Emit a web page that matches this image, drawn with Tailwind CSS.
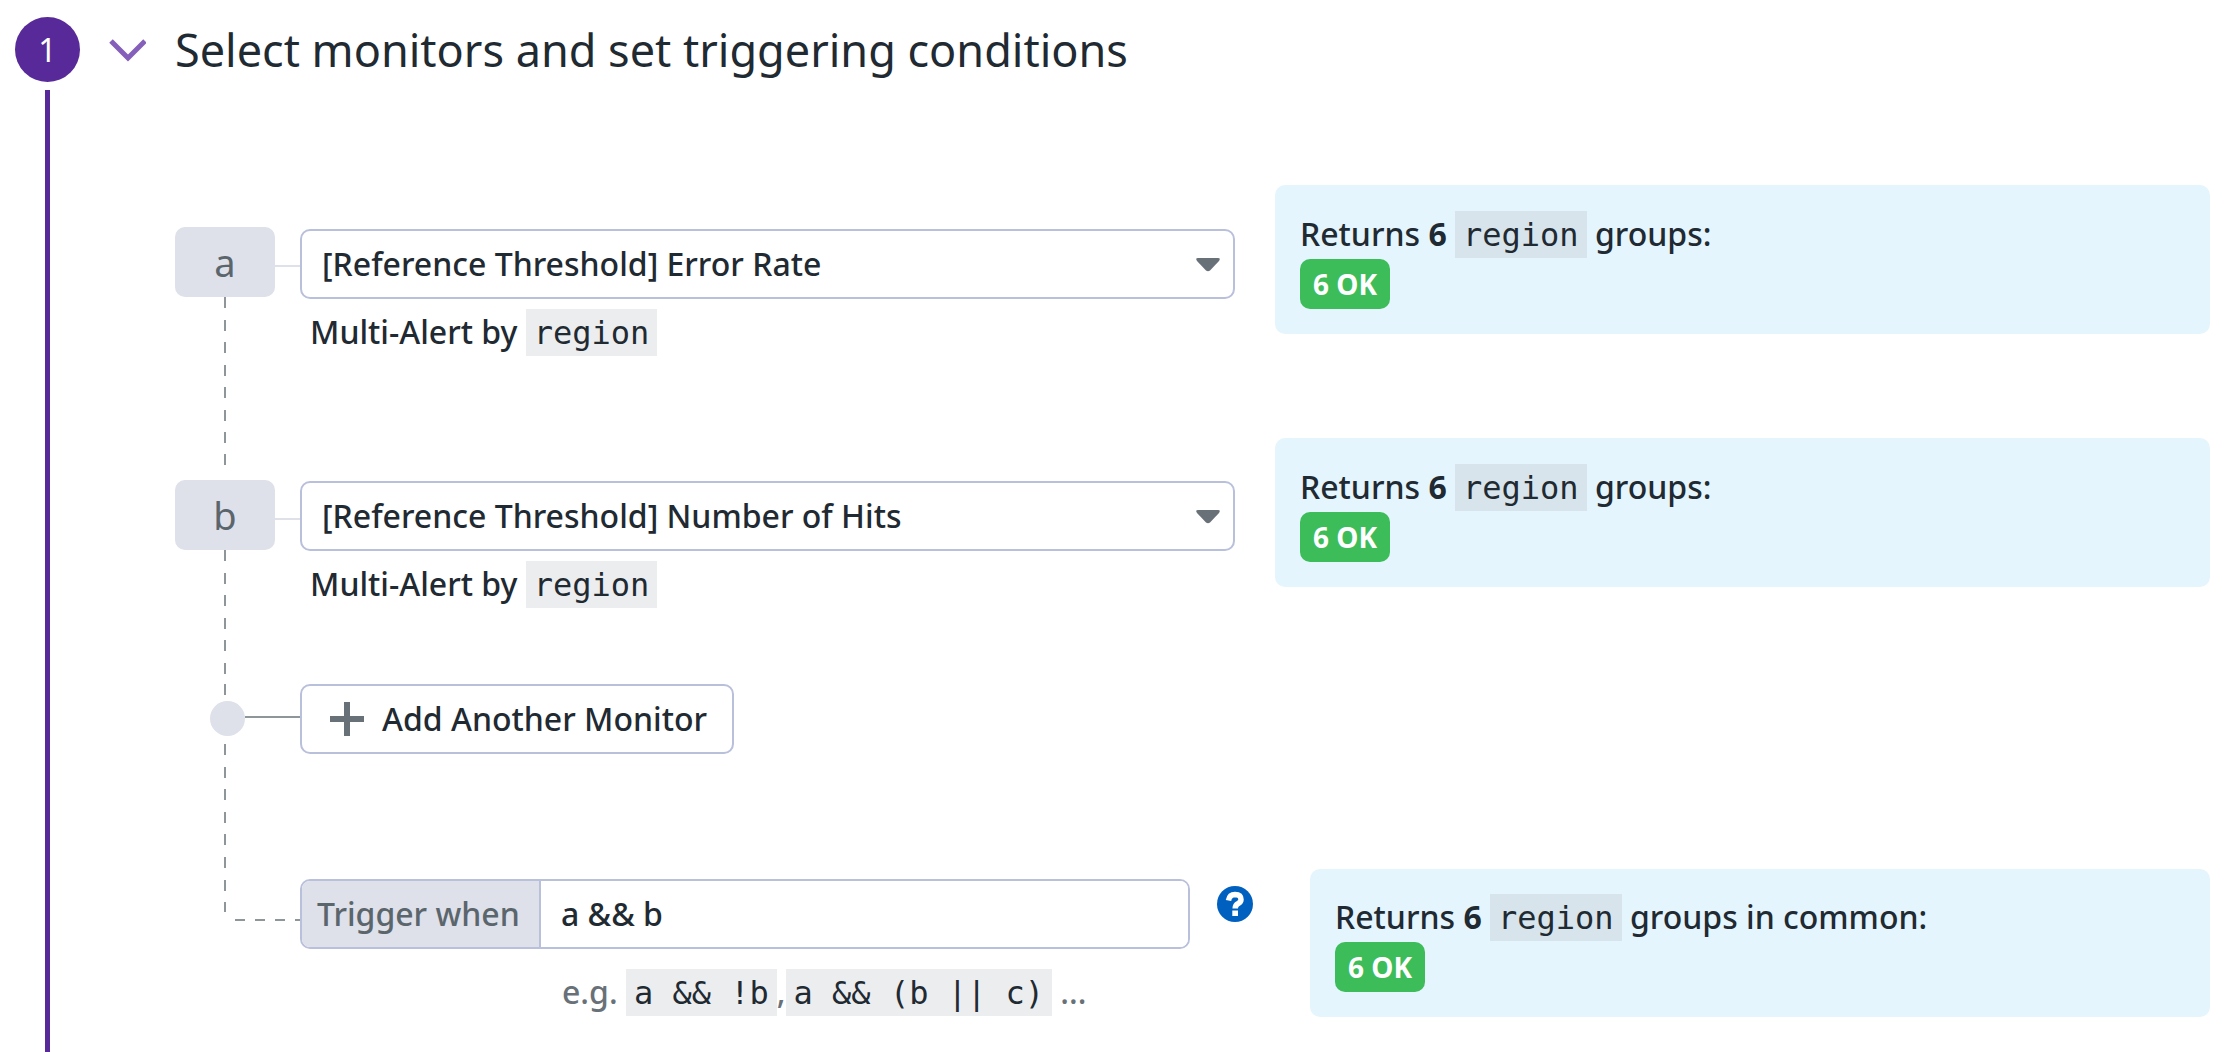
<!DOCTYPE html>
<html lang="en">
<head>
<meta charset="utf-8">
<meta name="viewport" content="width=device-width, initial-scale=1">
<title>Composite monitor</title>
<script src="https://cdn.jsdelivr.net/npm/@tailwindcss/browser@4"></script>
</head>
<body class="bg-white font-['Noto_Sans',sans-serif] text-[32px] leading-[48px] font-medium text-[#1f2a32]">
<div class="flex min-h-screen pl-[15px] pr-7">
  <!-- Step rail -->
  <div class="flex w-[65px] shrink-0 flex-col items-center gap-2 pt-[17px]">
    <div class="flex h-[65px] w-[65px] items-center justify-center rounded-full bg-[#582998] font-normal text-white">1</div>
    <div class="w-[5px] flex-1 bg-[#582998]"></div>
  </div>

  <main class="min-w-0 flex-1">
    <header class="flex h-[185px] items-start pt-4">
      <button type="button" aria-label="Collapse section" class="ml-7 flex h-[68px] w-[38px] items-center justify-center">
        <svg class="h-6 w-[38px]" viewBox="0 0 38 24" fill="none" stroke="#8560ba" stroke-width="5"><path d="M3 3L20 20L37 3"/></svg>
      </button>
      <h1 class="ml-[29px] text-[45px] font-normal leading-[68px]">Select monitors and set triggering conditions</h1>
    </header>

    <div class="pl-[95px]">
      <!-- Monitor a -->
      <section class="flex h-[253px]">
        <div class="flex w-[100px] shrink-0 flex-col items-center pt-[42px]">
          <label for="monitor-a" class="flex h-[70px] w-full items-center justify-center rounded-[10px] bg-[#dee0ea] text-[38px] font-normal text-[#5b656c]">a</label>
          <div class="w-[2px] flex-1 bg-[repeating-linear-gradient(to_bottom,#8f969a_0_11px,transparent_11px_23px,#8f969a_23px_34px,transparent_34px_45px)]"></div>
        </div>
        <div class="mt-20 h-[2px] w-[25px] shrink-0 bg-[#dee0ea]"></div>
        <div class="grid flex-1 grid-cols-2 items-start gap-10">
          <div class="pt-11">
            <div class="relative">
              <select id="monitor-a" class="block h-[70px] w-full appearance-none rounded-[10px] border-2 border-[#b9c0db] bg-white pl-5 pr-16">
                <option>[Reference Threshold] Error Rate</option>
              </select>
              <svg class="pointer-events-none absolute right-[15px] top-[29px] h-[14px] w-6" viewBox="0 0 24 14" fill="#697178"><path d="M2 0H22Q25 0 23 3L14 12.500Q12 14 10 12.500L1 3Q-1 0 2 0Z"/></svg>
            </div>
            <p class="pl-2.5 pt-[9px]">Multi-Alert by <code class="inline-block h-[47px] bg-[#ecedef] px-2 font-['DejaVu_Sans_Mono',monospace] font-normal leading-[49px]">region</code></p>
          </div>
          <div class="rounded-[10px] bg-[#e5f5fd] p-[25px]">
            <p class="h-[49px]">Returns <b>6</b> <code class="inline-block h-[47px] bg-[#d7e4eb] px-2 font-['DejaVu_Sans_Mono',monospace] font-normal leading-[49px]">region</code> groups:</p>
            <span class="flex h-[50px] w-fit items-center rounded-[10px] bg-[#3cbd5a] px-[13px] text-[28px] font-bold text-white">6 OK</span>
          </div>
        </div>
      </section>

      <!-- Monitor b -->
      <section class="flex h-[246px]">
        <div class="flex w-[100px] shrink-0 flex-col items-center">
          <div class="h-[42px] w-[2px] bg-[linear-gradient(to_bottom,#8f969a_0_5px,transparent_5px_16px,#8f969a_16px_27px,transparent_27px)]"></div>
          <label for="monitor-b" class="flex h-[70px] w-full items-center justify-center rounded-[10px] bg-[#dee0ea] text-[38px] font-normal text-[#5b656c]">b</label>
          <div class="w-[2px] flex-1 bg-[repeating-linear-gradient(to_bottom,#8f969a_0_11px,transparent_11px_23px,#8f969a_23px_34px,transparent_34px_45px)]"></div>
        </div>
        <div class="mt-20 h-[2px] w-[25px] shrink-0 bg-[#dee0ea]"></div>
        <div class="grid flex-1 grid-cols-2 items-start gap-10">
          <div class="pt-[43px]">
            <div class="relative">
              <select id="monitor-b" class="block h-[70px] w-full appearance-none rounded-[10px] border-2 border-[#b9c0db] bg-white pl-5 pr-16">
                <option>[Reference Threshold] Number of Hits</option>
              </select>
              <svg class="pointer-events-none absolute right-[15px] top-[29px] h-[14px] w-6" viewBox="0 0 24 14" fill="#697178"><path d="M2 0H22Q25 0 23 3L14 12.500Q12 14 10 12.500L1 3Q-1 0 2 0Z"/></svg>
            </div>
            <p class="pl-2.5 pt-[9px]">Multi-Alert by <code class="inline-block h-[47px] bg-[#ecedef] px-2 font-['DejaVu_Sans_Mono',monospace] font-normal leading-[49px]">region</code></p>
          </div>
          <div class="rounded-[10px] bg-[#e5f5fd] p-[25px]">
            <p class="h-[49px]">Returns <b>6</b> <code class="inline-block h-[47px] bg-[#d7e4eb] px-2 font-['DejaVu_Sans_Mono',monospace] font-normal leading-[49px]">region</code> groups:</p>
            <span class="flex h-[50px] w-fit items-center rounded-[10px] bg-[#3cbd5a] px-[13px] text-[28px] font-bold text-white">6 OK</span>
          </div>
        </div>
      </section>

      <!-- Add monitor -->
      <section class="flex h-[173px] items-stretch">
        <div class="flex w-[125px] shrink-0 flex-col">
          <div class="ml-[49px] h-[11px] w-[2px] bg-[#8f969a]"></div>
          <div class="mb-2 ml-[35px] mt-1.5 flex items-center">
            <div class="h-[35px] w-[35px] rounded-full bg-[#dee0ea]"></div>
            <div class="mb-[3px] h-[2px] flex-1 bg-[#8f969a]"></div>
          </div>
          <div class="ml-[49px] w-[2px] flex-1 bg-[repeating-linear-gradient(to_bottom,#8f969a_0_11px,transparent_11px_23px,#8f969a_23px_34px,transparent_34px_45px)]"></div>
        </div>
        <button type="button" class="flex h-[70px] items-center gap-[18px] rounded-[10px] border-2 border-[#b9c0db] bg-white pl-7 pr-[25px]">
          <svg class="h-[34px] w-[34px]" viewBox="0 0 34 34" fill="#697178"><path d="M14 0h6v14h14v6H20v14h-6V20H0v-6h14z"/></svg>
          Add Another Monitor
        </button>
      </section>

      <!-- Trigger expression -->
      <section class="flex">
        <div class="flex w-[125px] shrink-0 flex-col">
          <div class="ml-[49px] h-[55px] w-[2px] bg-[repeating-linear-gradient(to_bottom,#8f969a_0_11px,transparent_11px_23px,#8f969a_23px_34px,transparent_34px_45px)]"></div>
          <div class="ml-[60px] mt-[7px] h-[2px] bg-[repeating-linear-gradient(to_right,#8f969a_0_10px,transparent_10px_20px)]"></div>
        </div>
        <div class="grid flex-1 grid-cols-[89fr_120px_90fr] items-start pt-3">
          <div class="pt-2.5">
            <div class="flex h-[70px] overflow-hidden rounded-[10px] border-2 border-[#b9c0db]">
              <label for="trigger" class="flex w-[239px] shrink-0 items-center border-r-2 border-[#b9c0db] bg-[#dee0ea] pl-[15px] text-[#5b656c]">Trigger when</label>
              <input id="trigger" type="text" value="a &amp;&amp; b" class="min-w-0 flex-1 bg-white px-5 outline-none">
            </div>
            <p class="whitespace-nowrap pl-[262px] pt-[19px] text-[#697178]">e.g. <code class="inline-block h-[47px] bg-[#ecedef] px-2 font-['DejaVu_Sans_Mono',monospace] font-normal leading-[49px] text-[#1f2a32]">a &amp;&amp; !b</code>,<code class="inline-block h-[47px] bg-[#ecedef] px-2 font-['DejaVu_Sans_Mono',monospace] font-normal leading-[49px] text-[#1f2a32]">a &amp;&amp; (b || c)</code> ...</p>
          </div>
          <button type="button" aria-label="Help" class="ml-[27px] mt-[17px] h-9 w-9">
            <svg class="h-9 w-9" viewBox="0 0 36 36"><circle cx="18" cy="18" r="18" fill="#0060c0"/><path d="M11.500 14.500Q12.500 8.500 18 8.500Q24 8.700 24 13.500Q24 16 21.200 17.500Q18.200 19 18.200 22.500" fill="none" stroke="#fff" stroke-width="5.500"/><path d="M15.300 24.500h5.700v5.500h-5.700z" fill="#fff"/></svg>
          </button>
          <div class="rounded-[10px] bg-[#e5f5fd] px-[25px] pb-[25px] pt-6">
            <p class="h-[49px]">Returns <b>6</b> <code class="inline-block h-[47px] bg-[#d7e4eb] px-2 font-['DejaVu_Sans_Mono',monospace] font-normal leading-[49px]">region</code> groups in common:</p>
            <span class="flex h-[50px] w-fit items-center rounded-[10px] bg-[#3cbd5a] px-[13px] text-[28px] font-bold text-white">6 OK</span>
          </div>
        </div>
      </section>
    </div>
  </main>
</div>
</body>
</html>
